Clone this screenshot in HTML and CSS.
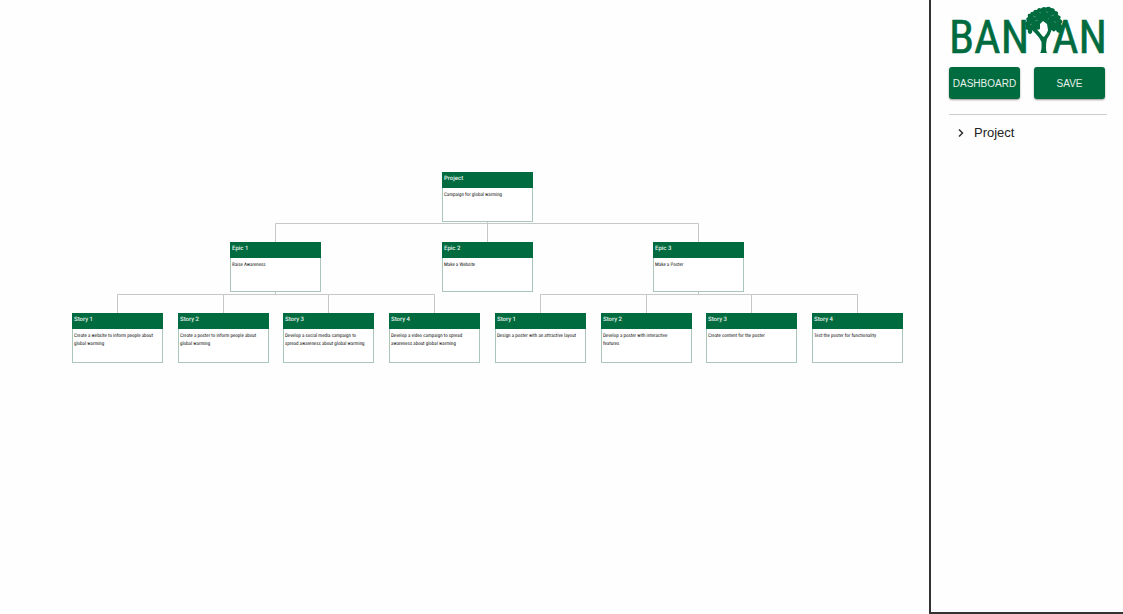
FILE: index.html
```html
<!DOCTYPE html>
<html lang="en">
<head>
<meta charset="utf-8">
<title>Banyan</title>
<link rel="stylesheet" href="styles.css">
</head>
<body>
<div class="app">
<main class="canvas">
  <div class="tree">
    <svg class="links" width="831" height="191" viewBox="0 0 831 191" fill="none" aria-hidden="true">
      <path d="M415.500 50V70M203.500 70V51.500H626.500V70M203.500 120V122M626.500 120V122M45.500 141V122.500H362.500V141M151.500 122V141M256.500 122V141M468.500 141V122.500H785.500V141M574.500 122V141M679.500 122V141"/>
    </svg>
    <article class="node top c3-mid"><h2>Project</h2><p>Campaign for global warming</p></article>
    <article class="node mid c1-mid"><h2>Epic 1</h2><p>Raise Awareness</p></article>
    <article class="node mid c3-mid"><h2>Epic 2</h2><p>Make a Website</p></article>
    <article class="node mid c5-mid"><h2>Epic 3</h2><p>Make a Poster</p></article>
    <article class="node low c0"><h2>Story 1</h2><p>Create a website to inform people about<br>global warming</p></article>
    <article class="node low c1"><h2>Story 2</h2><p>Create a poster to inform people about<br>global warming</p></article>
    <article class="node low c2"><h2>Story 3</h2><p>Develop a social media campaign to<br>spread awareness about global warming</p></article>
    <article class="node low c3"><h2>Story 4</h2><p>Develop a video campaign to spread<br>awareness about global warming</p></article>
    <article class="node low c4"><h2>Story 1</h2><p>Design a poster with an attractive layout</p></article>
    <article class="node low c5"><h2>Story 2</h2><p>Develop a poster with interactive<br>features</p></article>
    <article class="node low c6"><h2>Story 3</h2><p>Create content for the poster</p></article>
    <article class="node low c7"><h2>Story 4</h2><p>Test the poster for functionality</p></article>
  </div>
</main>
<aside class="sidebar">
  <svg class="logo" viewBox="0 0 158 52" role="img" aria-label="Banyan">
    <text class="word" x="0" y="47">BAN</text>
    <text class="word" x="103" y="47">AN</text>
    <path d="M91 47Q93 45 92.500 36Q91 32 87 28L83 24L86 21L91 27Q93 30 95 31Q98 28 100 22L103 23Q101 29 98 33Q97 36 97 42Q97 46 98 47Z"/>
    <path d="M84 6Q85 3 88 4Q89 1 92 2.500Q94 0 97 1.500Q100 0 102 2Q106 2 106 5Q110 5 109 9Q113 10 111 13Q115 15 112 18Q115 21 112 23Q113 26 110 27Q107 26 107 24Q104 27 103 24L99 24L98 18L94 15L91 18L91 23Q88 25 86 22Q86 25 83 24Q84 27 81 28Q78 27 79 24Q75 23 77 20Q75 17 78 15Q76 12 79 11Q78 7 81 8Q82 5 84 6Z"/>
    <path class="gaps" d="M84 10L87 11M90 6L92 7M97 5L99 7M102 10L105 9M86 15L89 14M81 19L83 18M105 15L107 17M99 12L100 13"/>
  </svg>
  <div class="actions">
    <button type="button">DASHBOARD</button>
    <button type="button">SAVE</button>
  </div>
  <hr>
  <button type="button" class="branch" aria-expanded="false">
    <svg width="16" height="16" viewBox="0 0 16 16" fill="none" aria-hidden="true"><path d="M6 4.500L9.500 8L6 11.500"/></svg>
    <span>Project</span>
  </button>
</aside>
</div>
</body>
</html>
```
FILE: styles.css
```css
* { box-sizing: border-box; }
body { margin: 0; font-family: Roboto, "Liberation Sans", sans-serif; background: #fefefe; color: #222; }
.app { display: flex; min-height: 100vh; }
.canvas { flex: 1; padding: 172px 0 0 72px; }
.tree { position: relative; width: 831px; height: 191px; text-rendering: geometricPrecision; }
.links { position: absolute; left: 0; top: 0; stroke: #c4c8c6; stroke-width: 1; }
.node { position: absolute; width: 91px; height: 50px; border: 1px solid #a9c6b9; background: #fff; }
.node h2 { margin: -1px -1px 0; height: 16px; padding: 3px 2px; background: #006b3f; color: #e6f1ec; font-size: 6px; line-height: 7px; font-weight: 500; }
.node p { margin: 0; padding: 3px 0 0 1px; font-family: "Roboto Condensed", Roboto, sans-serif; font-size: 5px; line-height: 8px; color: #111; white-space: nowrap; }
.top { top: 0; }
.mid { top: 70px; }
.low { top: 141px; }
.c0 { left: 0; }
.c1 { left: 106px; }
.c2 { left: 211px; }
.c3 { left: 317px; }
.c4 { left: 423px; }
.c5 { left: 529px; }
.c6 { left: 634px; }
.c7 { left: 740px; }
.c1-mid { left: 158px; }
.c3-mid { left: 370px; }
.c5-mid { left: 581px; }
.sidebar { width: 194px; padding: 6px 16px 0 18px; border-left: 2px solid #333; border-bottom: 2px solid #333; }
.logo { display: block; width: 158px; height: 52px; fill: #006b3f; overflow: visible; }
.gaps { stroke: #3f8e6b; stroke-width: 1; }
.word { font-family: "Roboto Condensed", "DejaVu Sans Condensed", sans-serif; font-size: 46px; stroke: #006b3f; stroke-width: 0.5; }
.actions { display: flex; gap: 14px; margin-top: 9px; }
.actions button { width: 71px; height: 32px; padding: 0; border: 0; border-radius: 3px; background: #006b3f; color: #e6f1ec; font: 10px "Liberation Sans", sans-serif; box-shadow: 0 1px 2px #0006; }
hr { margin: 15px 0 0; border: 0; border-top: 1px solid #ccc; }
.branch { display: flex; align-items: center; gap: 5px; margin-top: 9px; padding: 0 0 0 4px; border: 0; background: none; color: #222; font: 13px/18px "Liberation Sans", sans-serif; }
.branch svg { stroke: #333; stroke-width: 1.500; }
```
